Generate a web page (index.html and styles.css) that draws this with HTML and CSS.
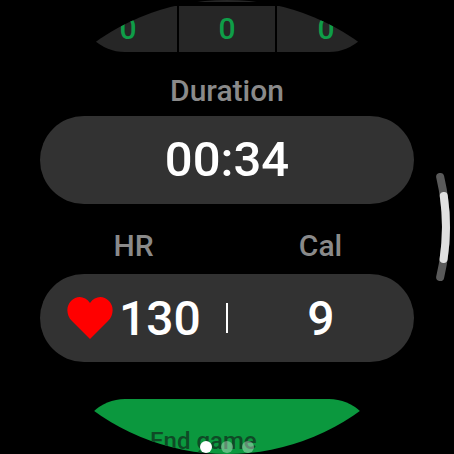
FILE: index.html
```html
<!DOCTYPE html>
<html>
<head>
<title>Match</title>
<link rel="stylesheet" href="styles.css">
</head>
<body>
	<div class="watch">
		<div class="prev"></div>

		<div class="scores">
			<div class="score">0</div>
			<div class="score">0</div>
			<div class="score">0</div>
		</div>

		<div class="label">Duration</div>
		<div class="pill time">00:34</div>

		<div class="labels">
			<div class="label">HR</div>
			<div class="label">Cal</div>
		</div>
		<div class="pill stats">
			<div class="stat hr">
				<svg class="heart" viewBox="0 0 46 44"><path d="M23 43 L5 25 C-1 19 -1 10 4 5 C10 -1 18 0 23 7 C28 0 36 -1 42 5 C47 10 47 19 41 25 Z" fill="#ff0000"/></svg>
				<span>130</span>
			</div>
			<div class="divider"></div>
			<div class="stat cal">9</div>
		</div>

		<div class="end">
			<svg class="flag" viewBox="0 0 24 24"><path d="M3 2 H7 V5 L16 10 L7 15 V24 H3 Z" fill="#0f4a26"/></svg>
			<span>End game</span>
		</div>

		<div class="dots">
			<div class="dot on"></div>
			<div class="dot"></div>
			<div class="dot"></div>
		</div>
	</div>

	<svg class="scrollbar" viewBox="0 0 454 454">
		<path d="M440.2 177 A 219 219 0 0 1 440.2 277" fill="none" stroke="#5a5a5a" stroke-width="8" stroke-linecap="round"/>
		<path d="M443.8 196 A 219 219 0 0 1 443.6 259" fill="none" stroke="#e0e0e0" stroke-width="8" stroke-linecap="round"/>
	</svg>
</body>
</html>
```

FILE: styles.css
```css
html, body
   {
   	margin			:  0 ;
   	width			:  454px ;
   	height			:  454px ;
   	background		:  #000000 ;
   	overflow		:  hidden ;
   	font-family		:  Roboto, "Liberation Sans", sans-serif ;
    }

.watch
   {
   	width			:  454px ;
   	height			:  454px ;
   	border-radius		:  50% ;
   	overflow		:  hidden ;
   	display			:  flex ;
   	flex-direction		:  column ;
   	align-items		:  center ;
   	position		:  relative ;
    }

.prev
   {
   	width			:  100% ;
   	height			:  2px ;
   	flex			:  none ;
   	background		:  #262626 ;
    }

.scores
   {
   	width			:  296px ;
   	height			:  46px ;
   	margin-top		:  4px ;
   	flex			:  none ;
   	display			:  grid ;
   	grid-template-columns	:  1fr 96px 1fr ;
   	gap			:  2px ;
   	border-radius		:  0 0 46px 46px ;
   	overflow		:  hidden ;
    }

.score
   {
   	background		:  #262626 ;
   	color			:  #0f9d48 ;
   	font-size		:  30px ;
   	font-weight		:  500 ;
   	line-height		:  45px ;
   	text-align		:  center ;
    }

.label
   {
   	color			:  #8a8a8a ;
   	font-size		:  30px ;
   	font-weight		:  500 ;
   	line-height		:  34px ;
    }

.scores + .label
   {
   	margin-top		:  22px ;
    }

.labels
   {
   	width			:  374px ;
   	margin-top		:  25px ;
   	display			:  grid ;
   	grid-template-columns	:  1fr 1fr ;
   	text-align		:  center ;
    }

.pill
   {
   	width			:  374px ;
   	height			:  88px ;
   	flex			:  none ;
   	border-radius		:  44px ;
   	background		:  #323232 ;
   	color			:  #ffffff ;
   	font-size		:  49px ;
   	font-weight		:  500 ;
    }

.time
   {
   	margin-top		:  8px ;
   	line-height		:  88px ;
   	text-align		:  center ;
    }

.stats
   {
   	margin-top		:  11px ;
   	display			:  grid ;
   	grid-template-columns	:  1fr 2px 1fr ;
   	align-items		:  center ;
   	font-size		:  48px ;
    }

.stat
   {
   	display			:  flex ;
   	align-items		:  center ;
   	justify-content		:  center ;
    }

.hr
   {
   	justify-content		:  flex-start ;
   	padding-left		:  27px ;
   	gap			:  6px ;
    }

.heart
   {
   	width			:  46px ;
   	height			:  44px ;
    }

.divider
   {
   	width			:  2px ;
   	height			:  30px ;
   	background		:  #ffffff ;
    }

.end
   {
   	width			:  296px ;
   	height			:  60px ;
   	margin-top		:  37px ;
   	flex			:  none ;
   	display			:  flex ;
   	gap			:  8px ;
   	border-radius		:  46px 46px 0 0 ;
   	background		:  #0b983e ;
   	color			:  #0f4a26 ;
   	font-size		:  24px ;
   	font-weight		:  500 ;
   	padding-top		:  28px ;
   	padding-left		:  39px ;
   	box-sizing		:  border-box ;
   	line-height		:  28px ;
    }

.flag
   {
   	width			:  24px ;
   	height			:  24px ;
   	margin-top		:  2px ;
    }

.dots
   {
   	position		:  absolute ;
   	left			:  200px ;
   	top			:  441px ;
   	display			:  flex ;
   	gap			:  9px ;
    }

.dot
   {
   	width			:  12px ;
   	height			:  12px ;
   	border-radius		:  50% ;
   	background		:  rgba(255, 255, 255, 0.35) ;
    }

.dot.on
   {
   	background		:  #ffffff ;
    }

.scrollbar
   {
   	position		:  absolute ;
   	left			:  0 ;
   	top			:  0 ;
   	width			:  454px ;
   	height			:  454px ;
    }
```
